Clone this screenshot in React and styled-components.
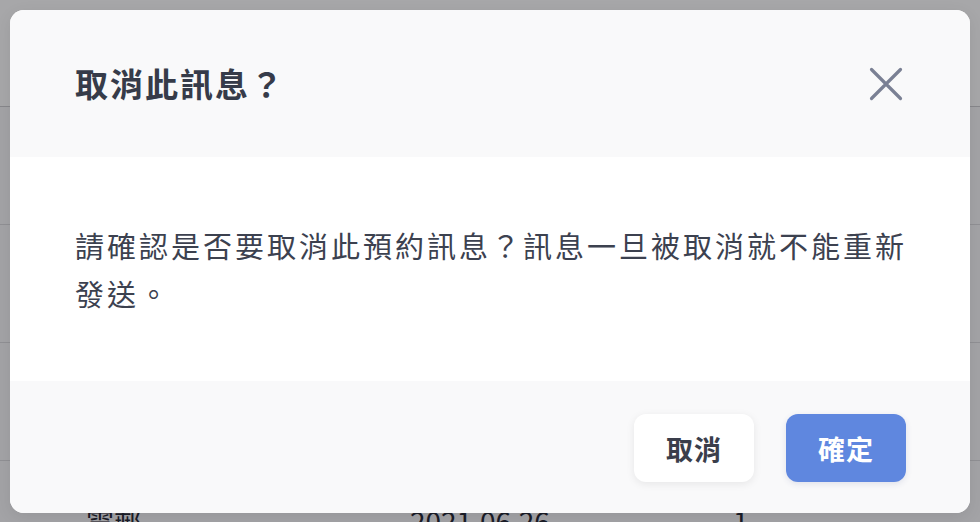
import React from "react";
import styled, { createGlobalStyle } from "styled-components";

const Global = createGlobalStyle`
  html, body { margin: 0; padding: 0; background: #ffffff; }
  body { font-family: "Noto Sans CJK TC", "Noto Sans", sans-serif; overflow: hidden; }
  * { box-sizing: border-box; }
`;

const Page = styled.div`
  width: 980px;
  height: 522px;
  position: relative;
  overflow: hidden;
  background: #ffffff;
`;

const TableHead = styled.div`
  height: 107px;
  border-bottom: 1px solid #c8c8cc;
  background: #fafafa;
`;

const Row = styled.div`
  height: 118px;
  border-bottom: 1px solid #d6d6da;
  display: grid;
  grid-template-columns: 324px 323px 1fr;
  align-items: center;
  padding-left: 86px;
  font-size: 28px;
  color: #1f2330;
  background: #f4f4f6;
`;

const Overlay = styled.div`
  position: absolute;
  inset: 0;
  background: rgba(20, 20, 24, 0.36);
  padding: 10px;
`;

const Modal = styled.div`
  width: 960px;
  height: 503px;
  border-radius: 14px;
  overflow: hidden;
  background: #ffffff;
  display: flex;
  flex-direction: column;
  box-shadow: 0 4px 16px rgba(0, 0, 0, 0.08);
`;

const Header = styled.div`
  height: 147px;
  flex: none;
  background: #f9f9fa;
  display: flex;
  align-items: center;
  justify-content: space-between;
  padding: 0 64px 0 64px;
`;

const Title = styled.h2`
  margin: 0;
  font-size: 33px;
  font-weight: 700;
  letter-spacing: 2px;
  color: #363b49;
  line-height: 1.2;
  padding-left: 1px;
`;

const Close = styled.button`
  width: 40px;
  height: 40px;
  border: none;
  background: transparent;
  padding: 0;
  display: flex;
  align-items: center;
  justify-content: center;
  cursor: pointer;
`;

const Body = styled.div`
  flex: 1;
  background: #ffffff;
  padding: 64px 56px 64px 65px;
`;

const Message = styled.p`
  margin: 0;
  font-size: 29px;
  letter-spacing: 3px;
  line-height: 48px;
  color: #3c414f;
`;

const Footer = styled.div`
  height: 133px;
  flex: none;
  background: #f9f9fa;
  display: flex;
  justify-content: flex-end;
  align-items: center;
  gap: 32px;
  padding: 1px 64px 0 64px;
`;

const Button = styled.button`
  width: 120px;
  height: 68px;
  border: none;
  border-radius: 12px;
  font-family: "Noto Sans CJK TC", "Noto Sans", sans-serif;
  font-size: 27px;
  font-weight: 700;
  letter-spacing: 1px;
  cursor: pointer;
  background: ${(p) => (p.$primary ? "#5f87df" : "#ffffff")};
  color: ${(p) => (p.$primary ? "#ffffff" : "#3a3e4b")};
  box-shadow: ${(p) =>
    p.$primary
      ? "0 2px 6px rgba(40, 60, 120, 0.12)"
      : "0 2px 8px rgba(0, 0, 0, 0.08)"};
`;

const rows = [
  ["", "", ""],
  ["", "", ""],
  ["", "", ""],
  ["電郵", "2021.06.26", "1"],
];

export default function App() {
  return (
    <Page>
      <Global />
      <TableHead />
      {rows.map((r, i) => (
        <Row key={i}>
          <span>{r[0]}</span>
          <span>{r[1]}</span>
          <span>{r[2]}</span>
        </Row>
      ))}
      <Overlay>
        <Modal>
          <Header>
            <Title>取消此訊息？</Title>
            <Close aria-label="close">
              <svg width="40" height="40" viewBox="0 0 40 40">
                <path
                  d="M5.5 5.5 L34.5 34.5 M34.5 5.5 L5.5 34.5"
                  stroke="#7a8094"
                  strokeWidth="3.2"
                  strokeLinecap="round"
                  fill="none"
                />
              </svg>
            </Close>
          </Header>
          <Body>
            <Message>
              請確認是否要取消此預約訊息？訊息一旦被取消就不能重新發送。
            </Message>
          </Body>
          <Footer>
            <Button>取消</Button>
            <Button $primary>確定</Button>
          </Footer>
        </Modal>
      </Overlay>
    </Page>
  );
}
